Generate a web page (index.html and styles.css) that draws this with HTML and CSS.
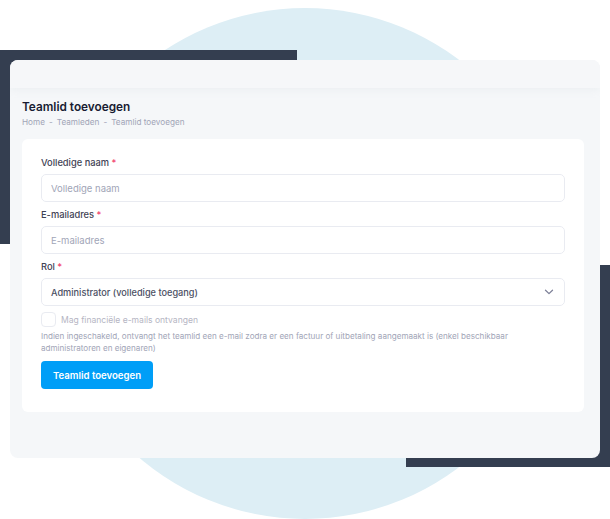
FILE: index.html
```html
<!DOCTYPE html>
<html lang="nl">

<head>
    <meta charset="UTF-8">
    <meta name="viewport" content="width=device-width, initial-scale=1.0">
    <title>Teamlid toevoegen</title>
    <link rel="stylesheet" href="styles.css">
</head>

<body>
    <div class="stage">
        <!-- decoration behind the window -->
        <div class="deco-circle"></div>
        <div class="deco-block deco-top"></div>
        <div class="deco-block deco-bottom"></div>

        <div class="window">
            <div class="toolbar"></div>
            <div class="page-head">
                <h1 class="page-title">Teamlid toevoegen</h1>
                <ul class="breadcrumb">
                    <li>Home</li>
                    <li class="sep">-</li>
                    <li>Teamleden</li>
                    <li class="sep">-</li>
                    <li>Teamlid toevoegen</li>
                </ul>
            </div>

            <form class="form-card">
                <label class="form-label" for="name">Volledige naam <span class="req">*</span></label>
                <input class="form-control" id="name" type="text" placeholder="Volledige naam">

                <label class="form-label" for="email">E-mailadres <span class="req">*</span></label>
                <input class="form-control" id="email" type="text" placeholder="E-mailadres">

                <label class="form-label" for="role">Rol <span class="req">*</span></label>
                <div class="form-select" id="role">
                    <span>Administrator (volledige toegang)</span>
                    <svg width="10" height="6" viewBox="0 0 10 6">
                        <path d="M1.5 1.2 L5 4.6 L8.5 1.2" fill="none" stroke="#7e8299" stroke-width="1.3" stroke-linecap="round" stroke-linejoin="round" />
                    </svg>
                </div>

                <div class="check-row">
                    <span class="check-box"></span>
                    <span class="check-label">Mag financiële e-mails ontvangen</span>
                </div>
                <p class="form-help">Indien ingeschakeld, ontvangt het teamlid een e-mail zodra er een factuur of uitbetaling aangemaakt is (enkel beschikbaar administratoren en eigenaren)</p>

                <button class="btn-primary" type="button">Teamlid toevoegen</button>
            </form>
        </div>
    </div>
</body>

</html>
```

FILE: styles.css
```css
* {
    margin: 0;
    padding: 0;
    box-sizing: border-box;
}

body {
    background: #ffffff;
    font-family: Inter, "Noto Sans", sans-serif;
    overflow: hidden;
}

.stage {
    position: relative;
    width: 610px;
    height: 519px;
    padding: 60px 10px 0 10px;
}

.deco-circle {
    position: absolute;
    left: 50px;
    top: 8px;
    width: 510px;
    height: 511px;
    border-radius: 50%;
    background: #ddeef5;
}

.deco-block {
    position: absolute;
    background: #343e50;
}

.deco-top {
    left: 0;
    top: 50px;
    width: 297px;
    height: 194px;
}

.deco-bottom {
    left: 406px;
    top: 265px;
    width: 204px;
    height: 202px;
}

.window {
    position: relative;
    height: 398px;
    background: #f5f7f9;
    border-radius: 8px;
    overflow: hidden;
}

.toolbar {
    height: 28px;
    background: #f6f7f9;
    box-shadow: 0 2px 8px rgba(190, 196, 206, 0.14);
}

.page-head {
    padding: 11px 12px 0 12px;
    height: 51px;
}

.page-title {
    font-size: 11.8px;
    font-weight: 600;
    color: #181c32;
    line-height: 16px;
}

.breadcrumb {
    display: flex;
    list-style: none;
    gap: 4px;
    margin-top: 1px;
    font-size: 8.2px;
    line-height: 12px;
    color: #a1a5b7;
}

.form-card {
    display: flex;
    flex-direction: column;
    align-items: flex-start;
    margin: 0 16px 0 12px;
    height: 273px;
    padding: 17px 19px 0 19px;
    background: #ffffff;
    border-radius: 6px;
}

.form-label {
    font-size: 9.3px;
    font-weight: 500;
    line-height: 14px;
    color: #3f4254;
    margin-bottom: 4px;
}

.req {
    color: #f1416c;
}

.form-control,
.form-select {
    width: 100%;
    height: 28px;
    border: 1px solid #e9ebf1;
    border-radius: 5px;
    background: #ffffff;
    padding: 0 9px;
    font-family: inherit;
    font-size: 9.5px;
    color: #5e6278;
    outline: none;
    margin-bottom: 6px;
}

.form-control::placeholder {
    color: #a1a5b7;
}

.form-select {
    display: flex;
    align-items: center;
    justify-content: space-between;
    padding-right: 10px;
    font-size: 9.2px;
    font-weight: 500;
    color: #4b4f63;
}

.check-row {
    display: flex;
    align-items: center;
    gap: 5px;
    margin-bottom: 3px;
}

.check-box {
    width: 15px;
    height: 15px;
    border: 1px solid #e9ebf1;
    border-radius: 4px;
}

.check-label {
    font-size: 8.55px;
    color: #b5b5c3;
}

.form-help {
    font-size: 8.1px;
    line-height: 12px;
    color: #a1a5b7;
    margin-bottom: 7px;
}

.btn-primary {
    height: 28px;
    width: 112px;
    border: none;
    border-radius: 4px;
    background: #009ef7;
    color: #ffffff;
    font-family: inherit;
    font-size: 9.6px;
    font-weight: 600;
}
```
